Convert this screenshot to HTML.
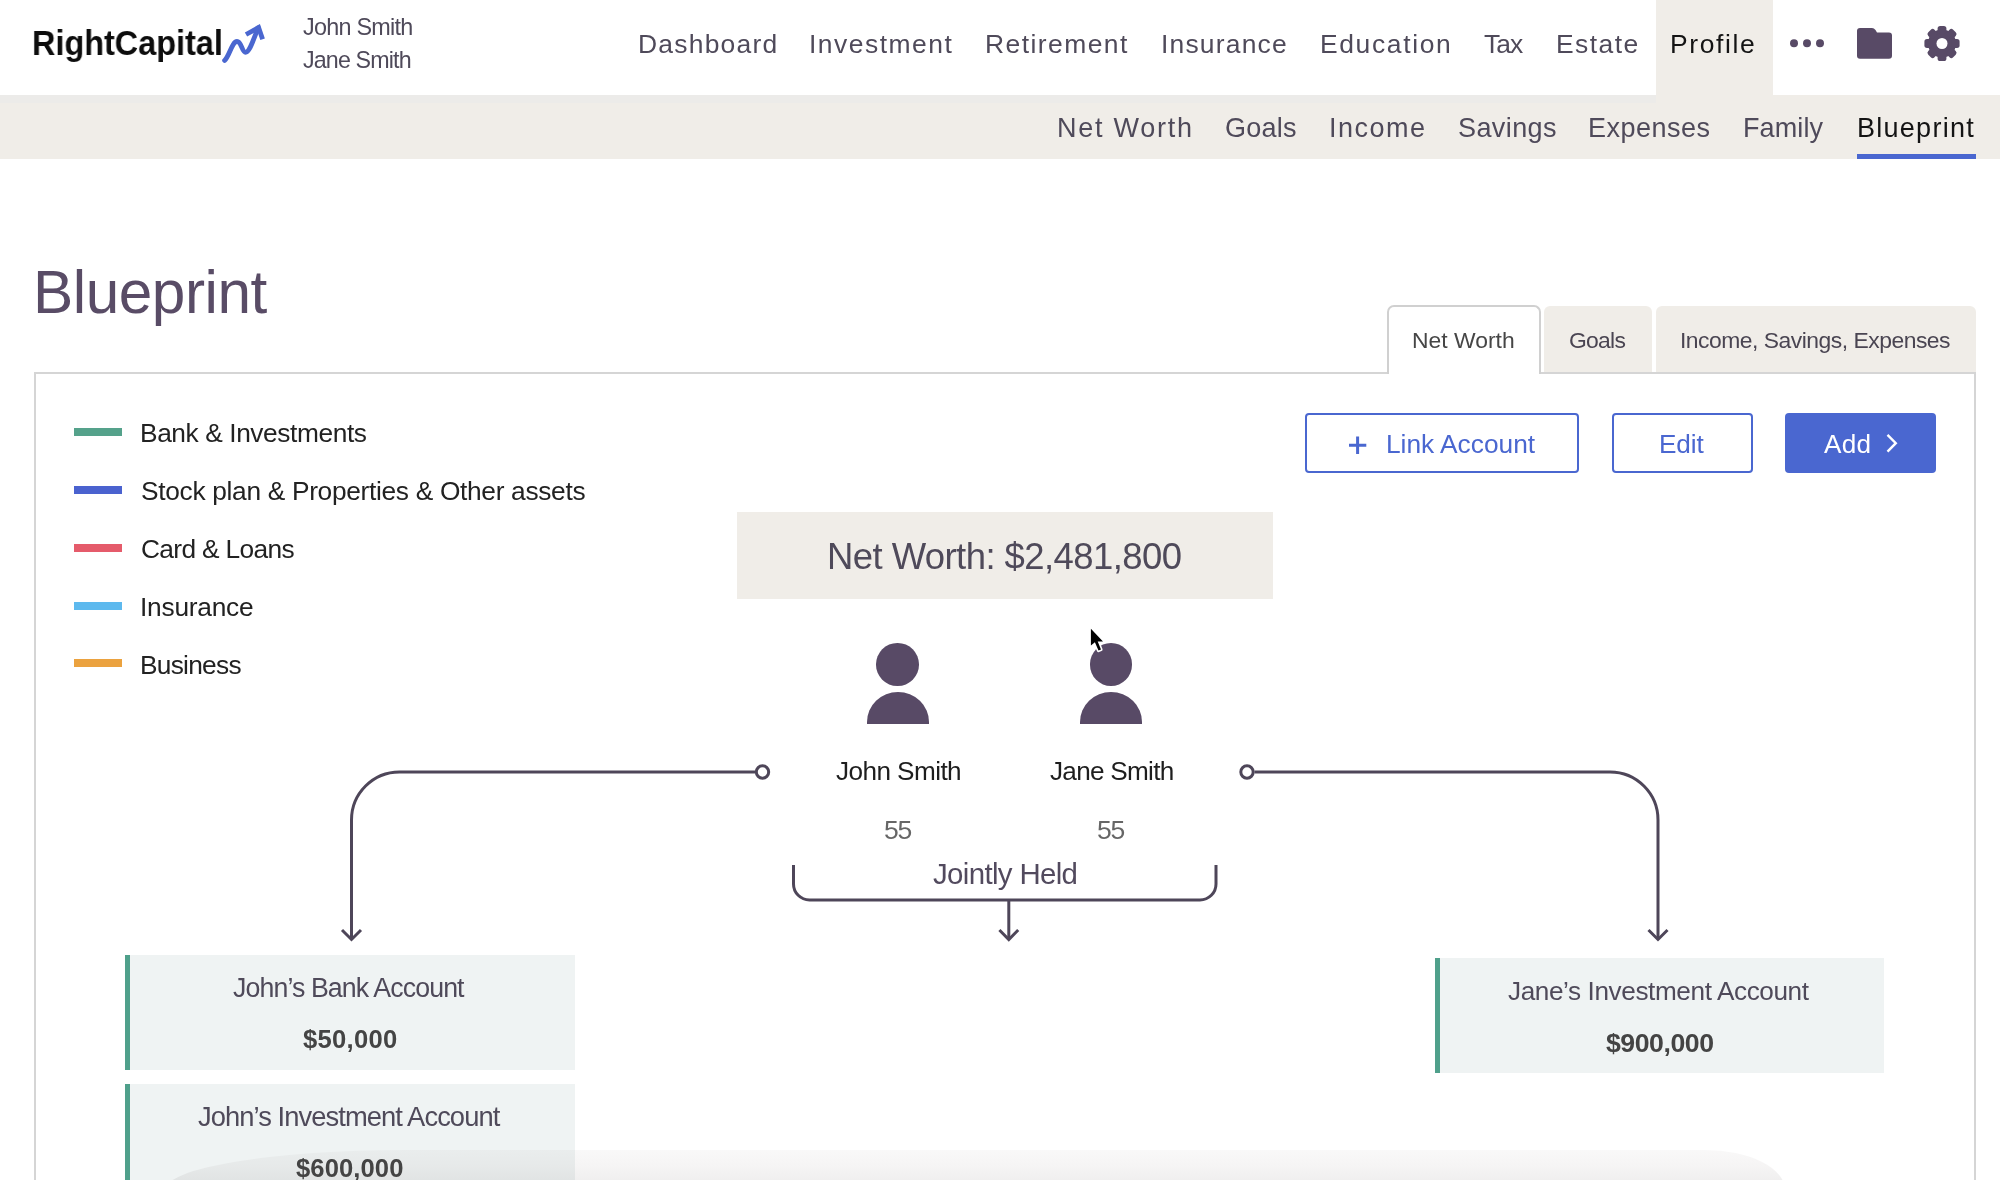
<!DOCTYPE html>
<html><head><meta charset="utf-8"><title>RightCapital Blueprint</title>
<style>
html,body{margin:0;padding:0;background:#fff;}
body{width:2000px;height:1180px;overflow:hidden;position:relative;font-family:"Liberation Sans",sans-serif;}
.t{position:absolute;white-space:pre;line-height:1;font-family:"Liberation Sans",sans-serif;will-change:transform;}
.r{position:absolute;}

</style></head><body>
<!-- header -->
<div class="r" style="left:1656px;top:0;width:117px;height:95px;background:#f0ede8"></div>
<div class="r" style="left:0;top:95px;width:2000px;height:64px;background:#f0ede8"></div>
<div class="r" style="left:0;top:95px;width:1656px;height:8px;background:#ecebe9"></div>
<div class="r" style="left:1857px;top:154px;width:119px;height:5px;background:#4a67d0"></div>
<svg class="r" style="left:0;top:0" width="2000" height="95" viewBox="0 0 2000 95">
  <path d="M224.6 60.5 C229.5 56 232 41.5 237 41.5 C241.5 41.5 242 52.3 245.5 52.3 C250 52.3 254 37 258.3 28" fill="none" stroke="#4a67d0" stroke-width="4.8" stroke-linecap="round" stroke-linejoin="round"/>
  <path d="M246 34.5 L258.6 27.5 L262.6 39.2" fill="none" stroke="#4a67d0" stroke-width="4.8" stroke-linecap="butt" stroke-linejoin="miter"/>
  <circle cx="1794" cy="43.2" r="4" fill="#584a66"/>
  <circle cx="1807" cy="43.2" r="4" fill="#584a66"/>
  <circle cx="1820" cy="43.2" r="4" fill="#584a66"/>
  <path d="M1860 28 H1872 Q1874 28 1875.5 30 L1877 32.5 H1889 Q1892 32.5 1892 35.5 V55.8 Q1892 58.8 1889 58.8 H1860 Q1857 58.8 1857 55.8 V31 Q1857 28 1860 28 Z" fill="#584a66"/>
  <g transform="translate(1942 43.5)" fill="#584a66">
    <circle r="14"/>
    <g id="tooth"><rect x="-4.4" y="-17.6" width="8.8" height="8" rx="2.6"/></g>
    <use href="#tooth" transform="rotate(45)"/>
    <use href="#tooth" transform="rotate(90)"/>
    <use href="#tooth" transform="rotate(135)"/>
    <use href="#tooth" transform="rotate(180)"/>
    <use href="#tooth" transform="rotate(225)"/>
    <use href="#tooth" transform="rotate(270)"/>
    <use href="#tooth" transform="rotate(315)"/>
    <circle r="5.5" fill="#ffffff"/>
  </g>
</svg>
<!-- tabs -->
<div class="r" style="left:1544px;top:305.5px;width:108px;height:68px;background:#f0ede8;border-radius:6px 6px 0 0"></div>
<div class="r" style="left:1655.5px;top:305.5px;width:320.5px;height:68px;background:#f0ede8;border-radius:6px 6px 0 0"></div>
<!-- panel -->
<div class="r" style="left:34px;top:372px;width:1938px;height:900px;border:2px solid #d5d5d5;box-sizing:content-box"></div>
<div class="r" style="left:1387px;top:305px;width:150px;height:67px;background:#fff;border:2px solid #d0d0d0;border-bottom:none;border-radius:7px 7px 0 0"></div>
<div class="r" style="left:1389px;top:370px;width:150px;height:4px;background:#fff"></div>
<!-- buttons -->
<div class="r" style="left:1305px;top:413px;width:270px;height:56px;border:2px solid #4a67d0;border-radius:4px"></div>
<div class="r" style="left:1612px;top:413px;width:137px;height:56px;border:2px solid #4a67d0;border-radius:4px"></div>
<div class="r" style="left:1785px;top:413px;width:151px;height:60px;background:#4a67d0;border-radius:4px"></div>
<svg class="r" style="left:0;top:0" width="2000" height="1180" viewBox="0 0 2000 1180">
  <path d="M1349 445.2 H1366.3 M1357.6 436.5 V454" stroke="#4a67d0" stroke-width="3" fill="none"/>
  <path d="M1887.5 434.8 L1895.8 443.2 L1887.5 451.6" stroke="#fff" stroke-width="2.4" fill="none"/>
</svg>
<!-- legend bars -->
<div class="r" style="left:74px;top:428px;width:48px;height:8px;background:#55a28b"></div>
<div class="r" style="left:74px;top:486px;width:48px;height:8px;background:#4a62cf"></div>
<div class="r" style="left:74px;top:544px;width:48px;height:8px;background:#e55b6b"></div>
<div class="r" style="left:74px;top:602px;width:48px;height:8px;background:#5db9ee"></div>
<div class="r" style="left:74px;top:659px;width:48px;height:8px;background:#eba23f"></div>
<!-- net worth box -->
<div class="r" style="left:737px;top:512px;width:536px;height:87px;background:#f0ede8"></div>
<!-- persons -->
<div class="r" style="left:876.4px;top:643.4px;width:42.6px;height:42.6px;border-radius:50%;background:#584a66"></div>
<div class="r" style="left:867px;top:691.6px;width:62px;height:32px;border-radius:31px 31px 0 0/30px 30px 0 0;background:#584a66"></div>
<div class="r" style="left:1089.9px;top:643.4px;width:42.6px;height:42.6px;border-radius:50%;background:#584a66"></div>
<div class="r" style="left:1080.3px;top:691.6px;width:62px;height:32px;border-radius:31px 31px 0 0/30px 30px 0 0;background:#584a66"></div>
<!-- cards -->
<div class="r" style="left:125px;top:955px;width:450px;height:115.4px;background:#eff3f3"></div>
<div class="r" style="left:125px;top:955px;width:5px;height:115.4px;background:#4fa08b"></div>
<div class="r" style="left:125px;top:1084px;width:450px;height:120px;background:#eff3f3"></div>
<div class="r" style="left:125px;top:1084px;width:5px;height:120px;background:#4fa08b"></div>
<div class="r" style="left:1435px;top:958px;width:449px;height:115.2px;background:#eff3f3"></div>
<div class="r" style="left:1435px;top:958px;width:5px;height:115.2px;background:#4fa08b"></div>
<!-- lines -->
<svg class="r" style="left:0;top:0" width="2000" height="1180" viewBox="0 0 2000 1180">
  <g fill="none" stroke="#4e4659" stroke-width="3">
    <path d="M755 772 H399.5 A48 48 0 0 0 351.5 820 V939"/>
    <path d="M342 930 L351.5 939.5 L361 930"/>
    <circle cx="762.5" cy="772" r="6.2" fill="#fff"/>
    <path d="M1254.5 772 H1610 A48 48 0 0 1 1658 820 V939"/>
    <path d="M1648.5 930 L1658 939.5 L1667.5 930"/>
    <circle cx="1247" cy="772" r="6.2" fill="#fff"/>
    <path d="M793.5 865 V884 A16 16 0 0 0 809.5 900 H1200 A16 16 0 0 0 1216 884 V865"/>
    <path d="M1008.8 900 V939"/>
    <path d="M999.4 930 L1008.8 939.5 L1018.2 930"/>
  </g>
</svg>

<div class="r" style="left:165px;top:1150px;width:1620px;height:40px;border-radius:240px 80px 0 0/40px 40px 0 0;background:linear-gradient(to bottom,rgba(70,50,50,0.03),rgba(70,50,50,0.05) 40%,rgba(40,30,30,0.09))"></div>
<div class="t" style="left:31.74px;top:26.30px;font-size:34.88px;letter-spacing:0.000px;color:#0d0d0d;font-weight:700;transform:scaleX(0.9292);transform-origin:0 0">RightCapital</div>
<div class="t" style="left:303.30px;top:15.50px;font-size:23.40px;letter-spacing:-0.756px;color:#4f4a5a;font-weight:400">John Smith</div>
<div class="t" style="left:303.30px;top:49.00px;font-size:23.26px;letter-spacing:-0.853px;color:#4f4a5a;font-weight:400">Jane Smith</div>
<div class="t" style="left:637.50px;top:31.00px;font-size:26.45px;letter-spacing:1.234px;color:#4f4a5a;font-weight:400">Dashboard</div>
<div class="t" style="left:808.50px;top:31.00px;font-size:26.45px;letter-spacing:1.504px;color:#4f4a5a;font-weight:400">Investment</div>
<div class="t" style="left:985.00px;top:31.00px;font-size:26.45px;letter-spacing:1.450px;color:#4f4a5a;font-weight:400">Retirement</div>
<div class="t" style="left:1161.00px;top:31.00px;font-size:26.45px;letter-spacing:1.200px;color:#4f4a5a;font-weight:400">Insurance</div>
<div class="t" style="left:1320.00px;top:31.00px;font-size:26.45px;letter-spacing:1.639px;color:#4f4a5a;font-weight:400">Education</div>
<div class="t" style="left:1484.00px;top:31.00px;font-size:26.45px;letter-spacing:-0.960px;color:#4f4a5a;font-weight:400">Tax</div>
<div class="t" style="left:1556.00px;top:31.00px;font-size:26.45px;letter-spacing:1.451px;color:#4f4a5a;font-weight:400">Estate</div>
<div class="t" style="left:1670.00px;top:31.00px;font-size:26.45px;letter-spacing:1.628px;color:#141414;font-weight:400">Profile</div>
<div class="t" style="left:1057.00px;top:114.80px;font-size:27.03px;letter-spacing:1.740px;color:#4f4a5a;font-weight:400">Net Worth</div>
<div class="t" style="left:1225.00px;top:114.80px;font-size:27.03px;letter-spacing:0.234px;color:#4f4a5a;font-weight:400">Goals</div>
<div class="t" style="left:1329.00px;top:114.80px;font-size:27.03px;letter-spacing:1.487px;color:#4f4a5a;font-weight:400">Income</div>
<div class="t" style="left:1458.00px;top:114.80px;font-size:27.03px;letter-spacing:0.399px;color:#4f4a5a;font-weight:400">Savings</div>
<div class="t" style="left:1588.00px;top:114.80px;font-size:27.03px;letter-spacing:0.495px;color:#4f4a5a;font-weight:400">Expenses</div>
<div class="t" style="left:1743.00px;top:114.80px;font-size:27.03px;letter-spacing:0.113px;color:#4f4a5a;font-weight:400">Family</div>
<div class="t" style="left:1856.80px;top:114.80px;font-size:27.03px;letter-spacing:1.260px;color:#141414;font-weight:400">Blueprint</div>
<div class="t" style="left:33.00px;top:261.50px;font-size:60.32px;letter-spacing:-0.466px;color:#594c66;font-weight:400">Blueprint</div>
<div class="t" style="left:1412.20px;top:328.50px;font-size:22.89px;letter-spacing:0.022px;color:#464646;font-weight:400">Net Worth</div>
<div class="t" style="left:1569.40px;top:328.50px;font-size:22.89px;letter-spacing:-0.730px;color:#4a4552;font-weight:400">Goals</div>
<div class="t" style="left:1679.50px;top:328.50px;font-size:22.89px;letter-spacing:-0.489px;color:#4a4552;font-weight:400">Income, Savings, Expenses</div>
<div class="t" style="left:1386.00px;top:431.00px;font-size:26.31px;letter-spacing:-0.005px;color:#4a67d0;font-weight:400">Link Account</div>
<div class="t" style="left:1659.00px;top:430.50px;font-size:26.16px;letter-spacing:-0.101px;color:#4a67d0;font-weight:400">Edit</div>
<div class="t" style="left:1824.40px;top:430.50px;font-size:26.16px;letter-spacing:0.304px;color:#ffffff;font-weight:400">Add</div>
<div class="t" style="left:140.40px;top:419.70px;font-size:26.31px;letter-spacing:-0.407px;color:#222222;font-weight:400">Bank &amp; Investments</div>
<div class="t" style="left:140.60px;top:477.70px;font-size:26.31px;letter-spacing:-0.310px;color:#222222;font-weight:400">Stock plan &amp; Properties &amp; Other assets</div>
<div class="t" style="left:140.60px;top:535.70px;font-size:26.31px;letter-spacing:-0.659px;color:#222222;font-weight:400">Card &amp; Loans</div>
<div class="t" style="left:139.60px;top:593.70px;font-size:26.31px;letter-spacing:-0.233px;color:#222222;font-weight:400">Insurance</div>
<div class="t" style="left:139.60px;top:651.70px;font-size:26.31px;letter-spacing:-0.736px;color:#222222;font-weight:400">Business</div>
<div class="t" style="left:827.10px;top:539.30px;font-size:36.48px;letter-spacing:-0.564px;color:#4f4a5a;font-weight:400">Net Worth: $2,481,800</div>
<div class="t" style="left:835.80px;top:757.70px;font-size:26.16px;letter-spacing:-0.578px;color:#1e1e1e;font-weight:400">John Smith</div>
<div class="t" style="left:1050.20px;top:757.70px;font-size:26.16px;letter-spacing:-0.733px;color:#1e1e1e;font-weight:400">Jane Smith</div>
<div class="t" style="left:883.60px;top:817.20px;font-size:26.52px;letter-spacing:-1.247px;color:#666666;font-weight:400">55</div>
<div class="t" style="left:1097.00px;top:817.20px;font-size:26.52px;letter-spacing:-1.147px;color:#666666;font-weight:400">55</div>
<div class="t" style="left:933.00px;top:858.75px;font-size:29.43px;letter-spacing:-0.647px;color:#524a5e;font-weight:400">Jointly Held</div>
<div class="t" style="left:233.20px;top:975.20px;font-size:26.74px;letter-spacing:-0.898px;color:#4f4a5a;font-weight:400">John’s Bank Account</div>
<div class="t" style="left:302.80px;top:1027.00px;font-size:25.60px;letter-spacing:0.287px;color:#444444;font-weight:700">$50,000</div>
<div class="t" style="left:198.00px;top:1103.00px;font-size:27.33px;letter-spacing:-0.930px;color:#4f4a5a;font-weight:400">John’s Investment Account</div>
<div class="t" style="left:296.00px;top:1156.00px;font-size:25.60px;letter-spacing:0.098px;color:#444444;font-weight:700">$600,000</div>
<div class="t" style="left:1508.00px;top:978.00px;font-size:26.16px;letter-spacing:-0.402px;color:#4f4a5a;font-weight:400">Jane’s Investment Account</div>
<div class="t" style="left:1606.00px;top:1030.00px;font-size:26.67px;letter-spacing:-0.451px;color:#444444;font-weight:700">$900,000</div>
<svg class="r" style="left:1080px;top:620px" width="40" height="40" viewBox="1080 620 40 40">
  <path d="M1090.9 628.8 V645.5 L1094.9 642.3 L1098.5 650.6 L1101 649.6 L1097.7 641.4 H1103 Z" fill="#fff" stroke="#fff" stroke-width="3.2" stroke-linejoin="round"/>
  <path d="M1090.9 628.8 V645.5 L1094.9 642.3 L1098.5 650.6 L1101 649.6 L1097.7 641.4 H1103 Z" fill="#000"/>
</svg>
</body></html>
